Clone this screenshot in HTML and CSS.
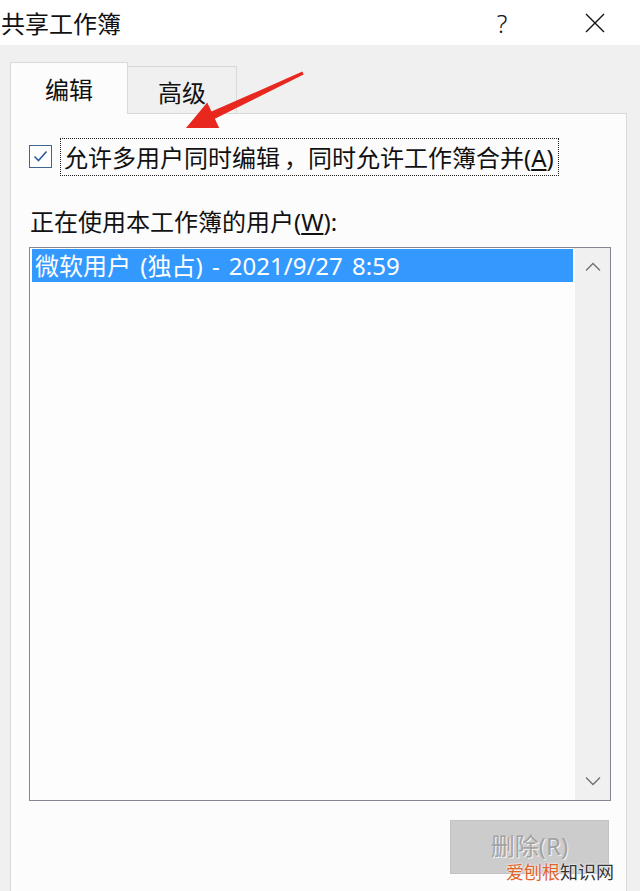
FILE: index.html
```html
<!DOCTYPE html>
<html lang="zh-CN">
<head>
<meta charset="utf-8">
<title>共享工作簿</title>
<link rel="stylesheet" href="styles.css">
</head>
<body>
<div class="dialog">
  <div class="titlebar">
    <span class="title">共享工作簿</span>
    <span class="help">?</span>
    <span class="close">
      <svg width="20" height="20" viewBox="0 0 20 20"><path d="M1 1 L19 19 M19 1 L1 19" stroke="#111" stroke-width="1.4" fill="none"/></svg>
    </span>
  </div>
  <div class="body">
    <div class="tabs">
      <div class="tab active">编辑</div>
      <div class="tab">高级</div>
    </div>
    <div class="panel">
      <div class="check-row">
        <span class="checkbox">
          <svg width="23" height="23" viewBox="0 0 23 23"><rect x="0.5" y="0.5" width="22" height="22" fill="#fff" stroke="#3f6590" stroke-width="1"/><path d="M5.5 11.5 L9.5 15.5 L17.5 6.5" stroke="#2a5d9c" stroke-width="1.6" fill="none"/></svg>
        </span>
        <span class="focus">允许多用户同时编辑<span class="cjk">，</span>同时允许工作簿合并(<u>A</u>)</span>
      </div>
      <div class="list-label">正在使用本工作簿的用户(<u>W</u>):</div>
      <div class="listbox">
        <div class="items">
          <div class="item selected">微软用户 (独占) - 2021/9/27 8:59</div>
        </div>
        <div class="scrollbar">
          <svg class="chev" width="16" height="10" viewBox="0 0 16 10"><path d="M1 8.5 L8 1.5 L15 8.5" stroke="#707070" stroke-width="1.3" fill="none"/></svg>
          <svg class="chev" width="16" height="10" viewBox="0 0 16 10"><path d="M1 1.5 L8 8.5 L15 1.5" stroke="#707070" stroke-width="1.3" fill="none"/></svg>
        </div>
      </div>
      <div class="actions">
        <div class="btn disabled"><div class="btn-label">删除(R)</div></div>
      </div>
    </div>
  </div>
  <svg class="arrow" width="640" height="891" viewBox="0 0 640 891">
    <path d="M302.4 71.6 L211.5 111.6 L207.2 102.5 L186 128 L219.2 127.9 L214.9 118.8 L303.6 74.4 Z" fill="#e8281e"/>
  </svg>
  <div class="watermark"><span class="wm-a">爱刨根</span><span class="wm-b">知识网</span></div>
</div>
</body>
</html>
```

FILE: styles.css
```css
html, body {
  margin: 0;
  padding: 0;
}
body {
  width: 640px;
  height: 891px;
  overflow: hidden;
  background: #f0f0f0;
  font-family: "Noto Sans", "Noto Sans CJK SC", sans-serif;
  color: #111;
}
.dialog {
  position: relative;
  width: 640px;
  height: 891px;
}
.titlebar {
  height: 45px;
  background: #fff;
  display: flex;
  align-items: center;
  padding-left: 1px;
  padding-right: 35px;
}
.title {
  flex: 1;
  font-size: 24px;
  line-height: 44px;
  font-family: "Noto Sans CJK SC", sans-serif;
}
.help {
  width: 24px;
  text-align: center;
  font-size: 25px;
  font-weight: 300;
  line-height: 44px;
  margin-right: 71px;
}
.close {
  width: 20px;
  height: 20px;
  display: flex;
}
.body {
  padding: 17px 13px 0 10px;
}
.tabs {
  display: flex;
  align-items: flex-end;
  position: relative;
  z-index: 1;
  margin-bottom: -1px;
}
.tab {
  font-family: "Noto Sans CJK SC", sans-serif;
  font-size: 24px;
  box-sizing: border-box;
  border: 1px solid #d9d9d9;
  border-bottom: none;
  text-align: center;
}
.tab.active {
  width: 118px;
  height: 52px;
  line-height: 52px;
  background: #fcfcfc;
}
.tab:not(.active) {
  width: 109px;
  height: 48px;
  line-height: 50px;
  background: #f0f0f0;
  border-left: none;
  border-bottom: 1px solid #d9d9d9;
}
.panel {
  background: #fcfcfc;
  border: 1px solid #d9d9d9;
  height: 800px;
  padding: 0 15px 0 18px;
}
.check-row {
  display: flex;
  align-items: center;
  margin-top: 24px;
  height: 37px;
}
.checkbox {
  width: 23px;
  height: 23px;
  display: flex;
  margin-right: 8px;
}
.focus {
  font-family: "Noto Sans", "Noto Sans CJK SC", sans-serif;
  font-size: 24px;
  line-height: 35px;
  border: 1px dotted #222;
  padding: 0 4px 0 3px;
  white-space: nowrap;
}
.cjk {
  font-family: "Noto Sans CJK SC", sans-serif;
  display: inline-block;
  width: 24px;
  text-align: center;
  padding-left: 4px;
}
.list-label {
  margin-top: 31px;
  margin-left: 1px;
  font-size: 24px;
  line-height: 32px;
  white-space: nowrap;
}
.listbox {
  margin-top: 9px;
  height: 552px;
  border: 1px solid #82878f;
  background: #fdfdfd;
  display: flex;
}
.items {
  flex: 1;
  padding: 1px 2px 0 2px;
}
.item {
  font-size: 24px;
  height: 33px;
  line-height: 33px;
  padding-left: 3px;
  white-space: nowrap;
  word-spacing: 3px;
}
.item.selected {
  background: #3399ff;
  color: #fff;
}
.scrollbar {
  width: 35px;
  background: #f0f0f0;
  display: flex;
  flex-direction: column;
  justify-content: space-between;
  align-items: center;
  padding: 14px 0 14px 0;
}
.actions {
  display: flex;
  justify-content: flex-end;
  margin-top: 19px;
  padding-right: 2px;
}
.btn {
  width: 159px;
  height: 54px;
  box-sizing: border-box;
  border: 1px solid #c2c2c2;
  background: #cccccc;
  display: flex;
  align-items: center;
  justify-content: center;
  padding-bottom: 3px;
}
.btn-label {
  font-size: 24px;
  line-height: 24px;
  height: 24px;
  overflow: visible;
  color: #a3a3a3;
  text-shadow: 1px 1px 0 #f4f4f4;
}
.arrow {
  position: absolute;
  left: 0;
  top: 0;
  z-index: 2;
  pointer-events: none;
}
.watermark {
  position: absolute;
  z-index: 3;
  left: 506px;
  top: 862px;
  height: 19px;
  display: flex;
  font-family: "Noto Sans CJK SC", sans-serif;
  font-size: 18px;
  line-height: 19px;
  white-space: nowrap;
  text-shadow: 0 0 2px #fff, 0 0 2px #fff;
}
.wm-a, .wm-b {
  display: block;
  height: 19px;
}
.wm-a {
  color: #e0652b;
}
.wm-b {
  color: #333;
}
```
